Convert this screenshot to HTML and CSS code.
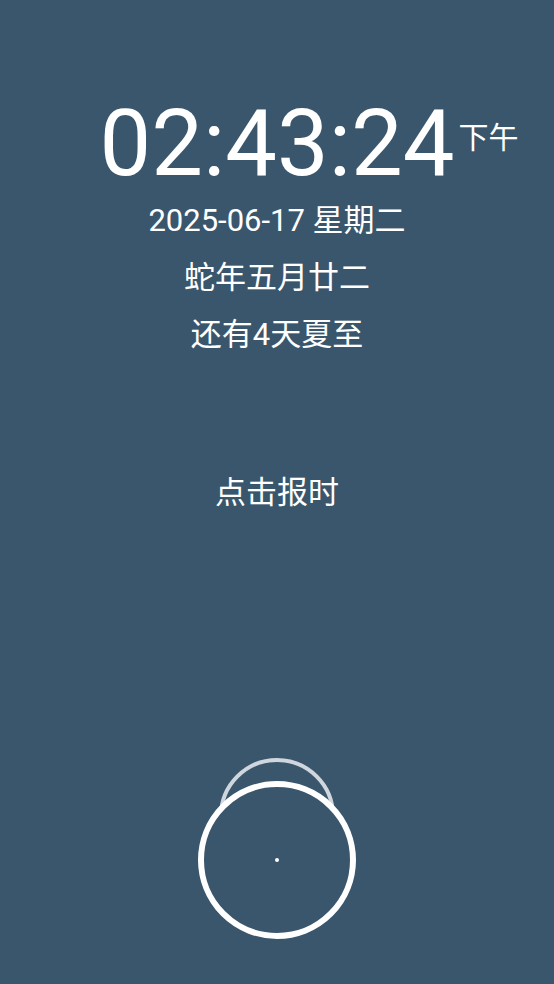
FILE: index.html
```html
<!DOCTYPE html>
<html lang="zh-CN">
  <head>
    <meta charset="UTF-8" />
    <meta name="viewport" content="width=device-width, initial-scale=1.0" />
    <title>报时钟</title>
    <link rel="stylesheet" href="styles.css">
  </head>
  <body>
    <div class="container">
      <div class="clock">
        <span class="time" id="time">02:43:24<span class="ampm" id="ampm">下午</span></span>
      </div>
      <div class="info">
        <p class="line" id="date">2025-06-17 星期二</p>
        <p class="line" id="lunar">蛇年五月廿二</p>
        <p class="line" id="term">还有4天夏至</p>
      </div>
      <p class="announce" id="announce">点击报时</p>
      <svg class="knob" width="170" height="190" viewBox="0 0 170 190">
        <circle cx="85" cy="62" r="56" fill="none" stroke="#cfd6dd" stroke-width="4" />
        <circle cx="85" cy="106" r="76" fill="#3a566d" stroke="#ffffff" stroke-width="6" />
        <circle cx="85" cy="106" r="2" fill="#ffffff" />
      </svg>
    </div>
  </body>
</html>
```

FILE: styles.css
```css
body {
  font-family: Roboto, "Noto Sans CJK SC", sans-serif;
  background-color: #3a566d;
  color: #ffffff;
  margin: 0;
  height: 984px;
  overflow: hidden;
}

.container {
  display: flex;
  flex-direction: column;
  align-items: center;
}

.clock {
  margin-top: 96px;
  height: 96px;
  line-height: 96px;
}

.time {
  position: relative;
  font-size: 92px;
}

.ampm {
  position: absolute;
  left: 100%;
  top: 0;
  margin-left: 4px;
  font-size: 30px;
  white-space: nowrap;
}

.info {
  margin-top: 0;
  text-align: center;
}

.line {
  margin: 0;
  font-size: 31px;
  line-height: 57px;
}

.announce {
  margin: 101px 0 0;
  font-size: 31px;
  line-height: 57px;
}

.knob {
  margin-top: 233px;
}
```
